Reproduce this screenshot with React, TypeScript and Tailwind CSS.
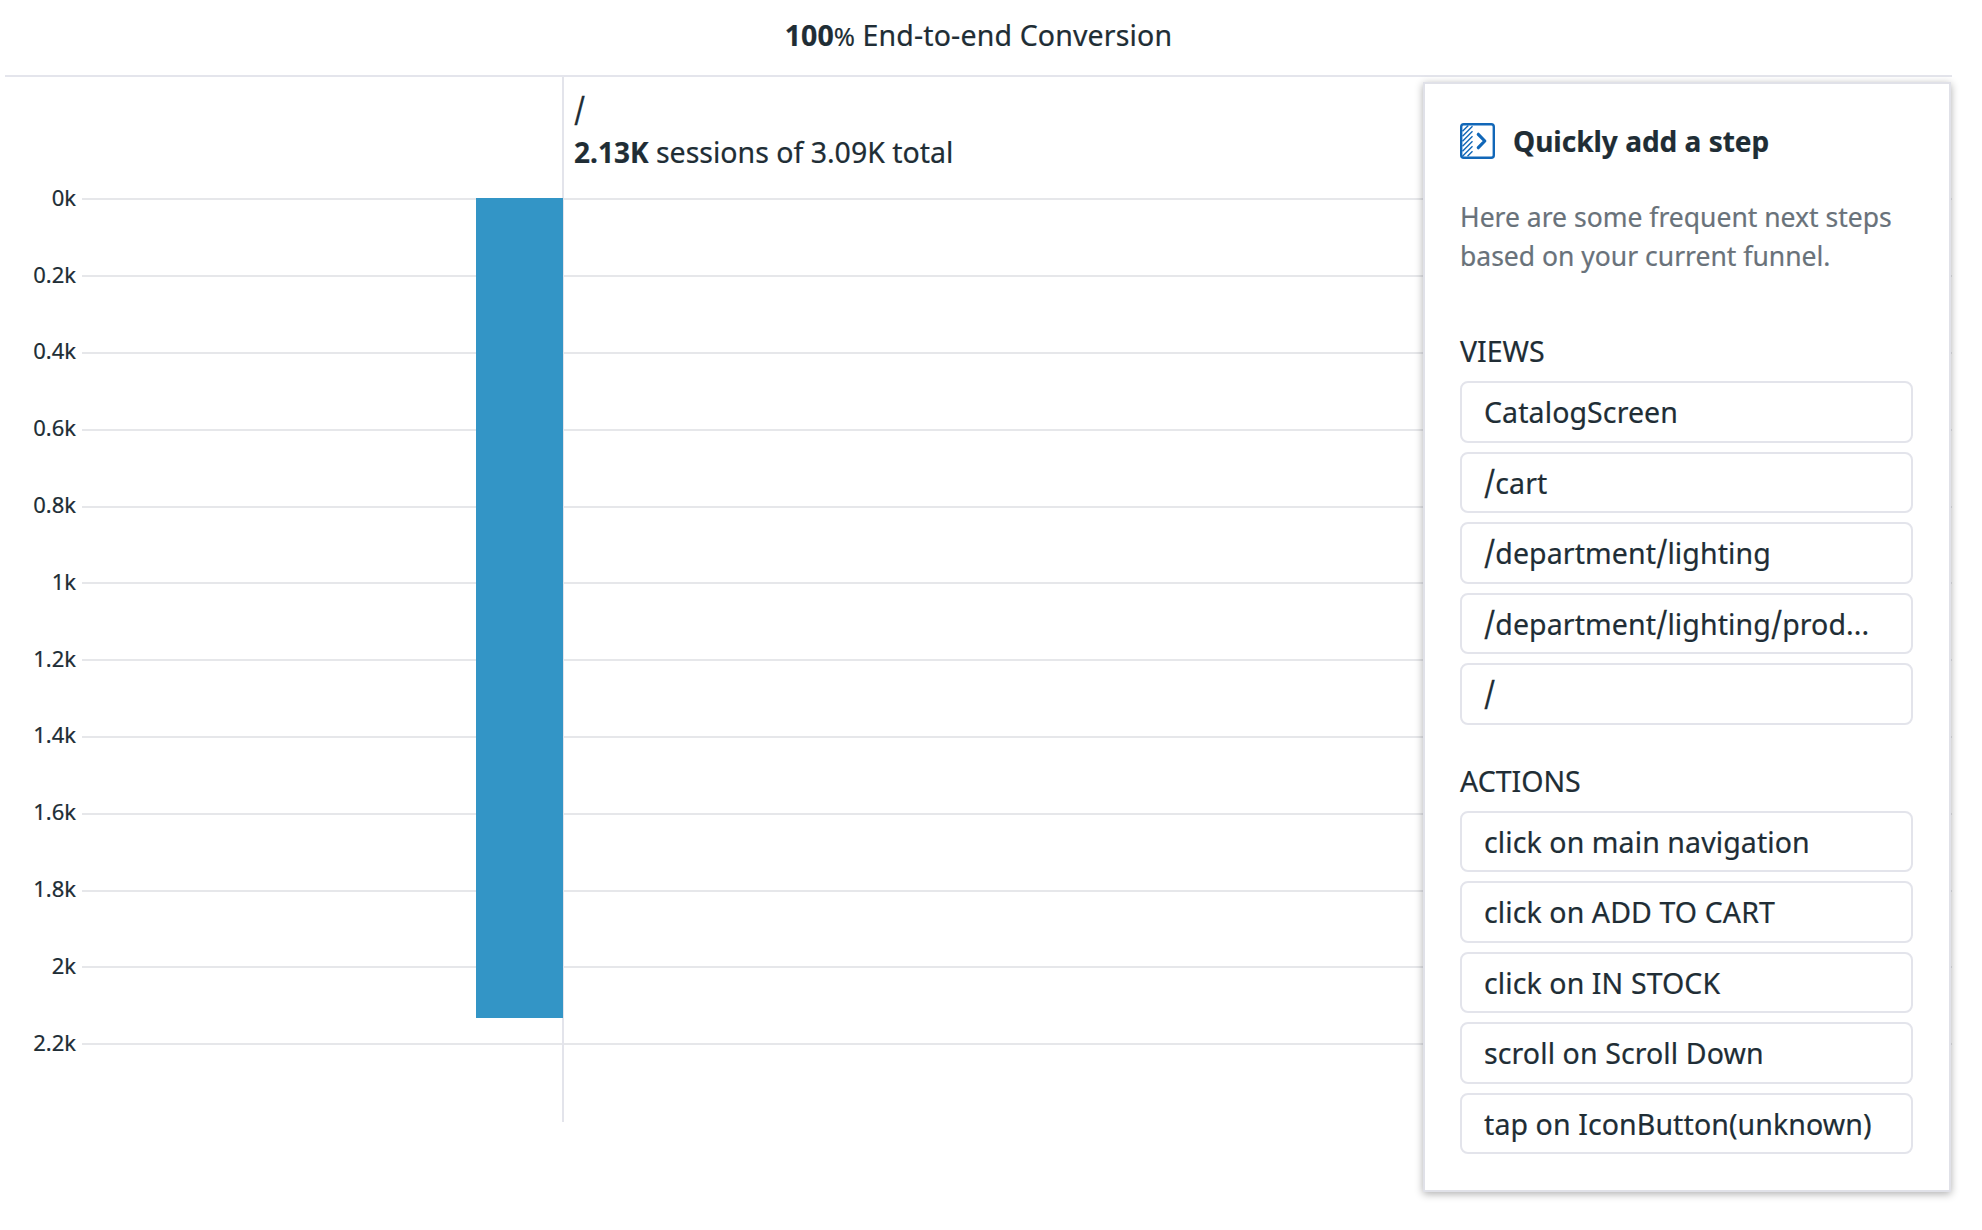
const ticks = ['0k', '0.2k', '0.4k', '0.6k', '0.8k', '1k', '1.2k', '1.4k', '1.6k', '1.8k', '2k', '2.2k'];

const views = ['CatalogScreen', '/cart', '/department/lighting', '/department/lighting/prod...', '/'];

const actions = [
  'click on main navigation',
  'click on ADD TO CART',
  'click on IN STOCK',
  'scroll on Scroll Down',
  'tap on IconButton(unknown)',
];

function StepIcon() {
  return (
    <svg className="h-9 w-[35px] shrink-0" viewBox="0 0 35 36" fill="none" stroke="#1167b8">
      <rect x="1.2" y="1.2" width="32.6" height="33.6" rx="2.6" strokeWidth="2.4" />
      <path
        d="M2.5 8.3L8.3 2.5M2.5 13.3L12.5 3.3M2.5 18.3L12.5 8.3M2.5 23.3L12.5 13.3M2.5 28.3L12.5 18.3M2.5 33.3L12.5 23.3M7.5 33.3L12.5 28.3"
        strokeWidth="1.4"
      />
      <path d="M18.3 11.3L24.8 18L18.3 24.7" strokeWidth="3.2" strokeLinecap="round" strokeLinejoin="round" />
    </svg>
  );
}

/* Text whose slashes are drawn taller than the capitals. */
function PathText({ text }: { text: string }) {
  return (
    <>
      {text.split(/(\/)/).map((part, i) =>
        part === '/' ? (
          <span key={i} className="mx-[0.3px] inline-block scale-y-[1.4] leading-none">
            /
          </span>
        ) : (
          part
        ),
      )}
    </>
  );
}

function StepGroup({ title, items }: { title: string; items: string[] }) {
  return (
    <section>
      <h3 className="h-[49px] text-[28.5px] leading-[38px]">{title}</h3>
      <div className="flex flex-col gap-[9px]">
        {items.map((item) => (
          <button
            key={item}
            className="h-[61.5px] w-full truncate rounded-[8px] border-2 border-[#e3e4eb] px-[22px] pt-px text-left text-[28.5px] leading-[57px] tracking-[0.1px]"
          >
            <PathText text={item} />
          </button>
        ))}
      </div>
    </section>
  );
}

export default function App() {
  return (
    <div className="relative h-[1230px] w-[1982px] overflow-hidden bg-white font-['Noto_Sans',sans-serif] text-[#202d35] [-webkit-text-stroke:0.2px]">
      <header className="ml-[5px] flex h-[77px] w-[1947px] justify-center border-b-2 border-[#e4e5ec] text-[28.5px] leading-[38px]">
        <p className="mt-[16px] whitespace-nowrap">
          <span className="font-bold">100</span>
          <span className="text-[25.5px]">%</span>
          <span className="tracking-[0.15px]"> End-to-end Conversion</span>
        </p>
      </header>

      <main className="relative h-[1045px] w-[1952px] pt-[84px]">
        {ticks.map((tick) => (
          <div key={tick} className="flex h-[76.8px] items-center gap-[6px]">
            <span className="mb-[5px] w-[76px] text-right text-[22px] leading-[30px]">{tick}</span>
            <span className="h-[2px] grow bg-[#e6e7ea]" />
          </div>
        ))}
        <div className="absolute left-[562px] top-0 h-[1045px] w-[2px] bg-[#e3e4eb]" />
        <div className="absolute left-[475.5px] top-[121px] h-[819.5px] w-[87.5px] bg-[#3395c6]" />
        <div className="absolute left-[574px] top-[12px] text-[28.5px] leading-[42px]">
          <p>
            <PathText text="/" />
          </p>
          <p>
            <span className="text-[28px] font-bold">2.13K</span> sessions of 3.09K total
          </p>
        </div>
      </main>

      <aside className="absolute left-[1423px] top-[82px] h-[1110px] w-[528px] border-2 border-[#e0e1e8] bg-white pl-[35px] pr-[36px] shadow-[0_2px_8px_rgba(0,0,0,0.32)]">
        <div className="mt-[39px] flex h-9 items-center gap-[18px]">
          <StepIcon />
          <h2 className="text-[28px] font-bold leading-[38px]">Quickly add a step</h2>
        </div>
        <p className="mb-[56px] mt-[39px] whitespace-nowrap text-[26.5px] leading-[39px] text-[#69727a]">
          Here are some frequent next steps
          <br />
          based on your current funnel.
        </p>
        <div className="flex flex-col gap-[37px]">
          <StepGroup title="VIEWS" items={views} />
          <StepGroup title="ACTIONS" items={actions} />
        </div>
      </aside>
    </div>
  );
}
